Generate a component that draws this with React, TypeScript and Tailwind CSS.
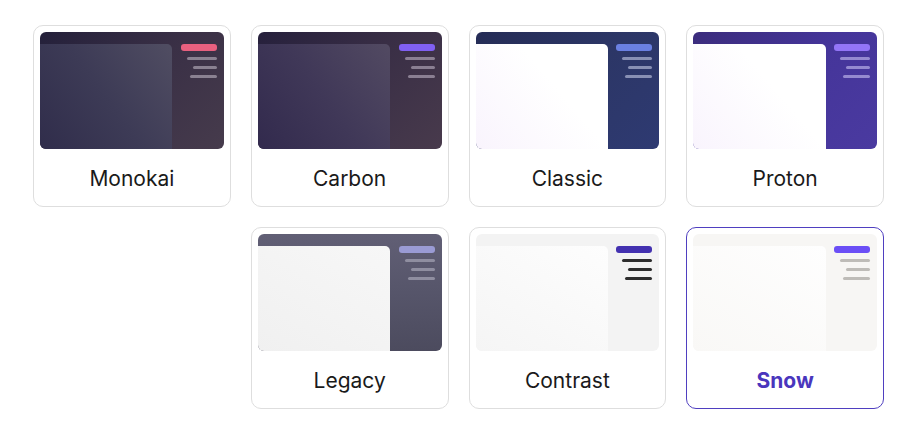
import React from "react";

type Theme = {
  name: string;
  bg: string;
  panel: string;
  pill: string;
  line: string;
  selected?: boolean;
  col?: string;
};

const themes: Theme[] = [
  {
    name: "Monokai",
    bg: "bg-[linear-gradient(135deg,#24203a_0%,#3a3046_50%,#463b4c_100%)]",
    panel: "bg-[linear-gradient(55deg,#302d4b_0%,#3d3b56_50%,#504d62_100%)]",
    pill: "bg-[#e8607f]",
    line: "bg-[#8a8191]",
  },
  {
    name: "Carbon",
    bg: "bg-[linear-gradient(135deg,#26203c_0%,#3a2f46_50%,#483a4c_100%)]",
    panel: "bg-[linear-gradient(55deg,#322a4d_0%,#403858_50%,#524a62_100%)]",
    pill: "bg-[#8060f2]",
    line: "bg-[#8a7f92]",
  },
  {
    name: "Classic",
    bg: "bg-[linear-gradient(135deg,#252c56_0%,#2c3666_50%,#2e3a72_100%)]",
    panel: "bg-[linear-gradient(50deg,#f9f4fd_0%,#ffffff_60%)]",
    pill: "bg-[#6a80e2]",
    line: "bg-[#8890b4]",
  },
  {
    name: "Proton",
    bg: "bg-[linear-gradient(135deg,#3b2c7c_0%,#45359a_50%,#4a3aa0_100%)]",
    panel: "bg-[linear-gradient(50deg,#f9f4fd_0%,#ffffff_60%)]",
    pill: "bg-[#9375f7]",
    line: "bg-[#958ad0]",
  },
  {
    name: "Legacy",
    bg: "bg-[linear-gradient(180deg,#615f75_0%,#56556a_50%,#4c4b5e_100%)]",
    panel: "bg-[linear-gradient(30deg,#f0f0f0_0%,#f7f7f7_100%)]",
    pill: "bg-[#9a9bd4]",
    line: "bg-[#8f8ea0]",
    col: "col-start-2",
  },
  {
    name: "Contrast",
    bg: "bg-[#f3f3f3]",
    panel: "bg-[linear-gradient(30deg,#f5f5f5_0%,#fdfdfd_100%)]",
    pill: "bg-[#4331b0]",
    line: "bg-[#2e2e2e]",
  },
  {
    name: "Snow",
    bg: "bg-[#f7f6f4]",
    panel: "bg-[linear-gradient(30deg,#f9f8f6_0%,#fefefe_100%)]",
    pill: "bg-[#6b4ff6]",
    line: "bg-[#bebcb8]",
    selected: true,
  },
];

function Card({ t }: { t: Theme }) {
  return (
    <div
      className={`flex h-[182px] flex-col rounded-[10px] border bg-white p-[6px] ${
        t.selected ? "border-[#4f3fc0]" : "border-[#dedede]"
      } ${t.col ?? ""}`}
    >
      <div className={`flex h-[117px] overflow-hidden rounded-[6px] ${t.bg}`}>
        <div className={`mt-[12px] w-[72%] rounded-tr-[5px] ${t.panel}`} />
        <div className="flex flex-1 flex-col items-end pr-[7px] pt-[12px]">
          <div className={`h-[7.5px] w-[36px] rounded-[3px] ${t.pill}`} />
          <div className={`mt-[6px] h-[3px] w-[30px] rounded-full ${t.line}`} />
          <div className={`mt-[6px] h-[3px] w-[24px] rounded-full ${t.line}`} />
          <div className={`mt-[6px] h-[3px] w-[27px] rounded-full ${t.line}`} />
        </div>
      </div>
      <div className="flex flex-1 items-center justify-center pt-[9px]">
        <span
          className={`text-[21px] leading-none ${
            t.selected ? "font-bold text-[#4a36bd]" : "font-normal text-[#1a1a1a]"
          }`}
        >
          {t.name}
        </span>
      </div>
    </div>
  );
}

export default function App() {
  return (
    <div
      className="min-h-[427px] w-[904px] bg-white pl-[33px] pr-[20px] pt-[24.5px]"
      style={{ fontFamily: "Inter, 'Noto Sans', sans-serif" }}
    >
      <div className="grid grid-cols-4 gap-5">
        {themes.map((t) => (
          <Card key={t.name} t={t} />
        ))}
      </div>
    </div>
  );
}
